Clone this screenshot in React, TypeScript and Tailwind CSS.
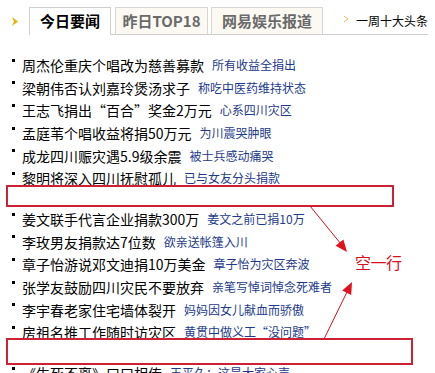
import React from "react";

const groupA: Array<[string, string]> = [
  ["周杰伦重庆个唱改为慈善募款", "所有收益全捐出"],
  ["梁朝伟否认刘嘉玲煲汤求子", "称吃中医药维持状态"],
  ["王志飞捐出“百合”奖金2万元", "心系四川灾区"],
  ["孟庭苇个唱收益将捐50万元", "为川震哭肿眼"],
  ["成龙四川赈灾遇5.9级余震", "被士兵感动痛哭"],
  ["黎明将深入四川抚慰孤儿", "已与女友分头捐款"],
];

const groupB: Array<[string, string]> = [
  ["姜文联手代言企业捐款300万", "姜文之前已捐10万"],
  ["李玫男友捐款达7位数", "欲亲送帐篷入川"],
  ["章子怡游说邓文迪捐10万美金", "章子怡为灾区奔波"],
  ["张学友鼓励四川灾民不要放弃", "亲笔写悼词悼念死难者"],
  ["李宇春老家住宅墙体裂开", "妈妈因女儿献血而骄傲"],
  ["房祖名推工作随时访灾区", "黄贯中做义工“没问题”"],
];

const groupC: Array<[string, string]> = [["《生死不离》口口相传", "王平久：这是大家心声"]];

function Row({ title, sub }: { title: string; sub: string }) {
  return (
    <li className="flex h-[22.6px] items-center whitespace-nowrap pl-[12px]">
      <span className="mr-[7px] h-[3px] w-[3px] shrink-0 -translate-y-[5px] bg-black" />
      <span className="text-[14px] leading-none text-black">{title}</span>
      <span className="ml-[8px] text-[12px] leading-none text-[#1d3a8c]">{sub}</span>
    </li>
  );
}

export default function App() {
  return (
    <div className="relative h-[373px] w-[435px] overflow-hidden bg-white font-['Noto_Sans_CJK_SC',sans-serif]">
      <div className="flex h-[35px] items-end">
        <div className="flex h-[28px] w-[29px] items-center pl-[12px]">
          <svg width="6" height="9" viewBox="0 0 6 9">
            <path d="M0 0 L6 4.5 L0 9 L2 4.5 Z" fill="#e2b100" />
          </svg>
        </div>
        <div className="flex h-[28px] w-[82px] items-center justify-center border-x border-t border-[#cfcfcf] bg-white text-[15px] font-bold text-black">
          今日要闻
        </div>
        <div className="flex h-full w-[317px] items-end border-b border-[#cfcfcf]">
          <div className="ml-[4px] flex h-[27px] w-[93px] items-center justify-center border-x border-t border-[#d6d6d6] bg-[#fbf9f2] text-[15px] font-bold text-[#6a6a6a]">
            昨日TOP18
          </div>
          <div className="ml-[3px] flex h-[27px] w-[112px] items-center justify-center border-x border-t border-[#d6d6d6] bg-[#fbf9f2] text-[15px] font-bold text-[#6a6a6a]">
            网易娱乐报道
          </div>
          <div className="flex h-[27px] flex-1 items-center justify-end">
            <svg width="4" height="6" viewBox="0 0 4 6" className="mr-[8px] -translate-y-[2px]">
              <path d="M0 0 L4 3 L0 6" fill="none" stroke="#e6c24a" strokeWidth="1" />
            </svg>
            <span className="text-[12px] leading-none text-black">一周十大头条</span>
          </div>
        </div>
      </div>

      <div className="pt-[19px]">
        <ul>
          {groupA.map(([t, s]) => (
            <Row key={t} title={t} sub={s} />
          ))}
        </ul>
        <div className="h-[18.4px]" />
        <ul>
          {groupB.map(([t, s]) => (
            <Row key={t} title={t} sub={s} />
          ))}
        </ul>
        <div className="h-[18.4px]" />
        <ul>
          {groupC.map(([t, s]) => (
            <Row key={t} title={t} sub={s} />
          ))}
        </ul>
      </div>

      {/* annotations */}
      <div className="absolute left-[6px] top-[185px] h-[22px] w-[388px] border-2 border-[#cc2233] bg-white" />
      <div className="absolute left-[6px] top-[338px] h-[27px] w-[407px] border-2 border-[#cc2233] bg-white" />
      <svg className="absolute left-0 top-0" width="435" height="373" viewBox="0 0 435 373">
        <line x1="310" y1="206" x2="341" y2="244" stroke="#d8101c" strokeWidth="1" />
        <polygon points="347,252 335.6,245.7 343.4,239.5" fill="#e0101c" />
        <line x1="324" y1="339" x2="347" y2="292" stroke="#d8101c" strokeWidth="1" />
        <polygon points="352,282 351.2,295 342.2,290.6" fill="#e0101c" />
      </svg>
      <span className="absolute left-[355px] top-[252px] text-[16px] leading-[20px] tracking-[-0.5px] text-[#d8101c]">
        空一行
      </span>
    </div>
  );
}
